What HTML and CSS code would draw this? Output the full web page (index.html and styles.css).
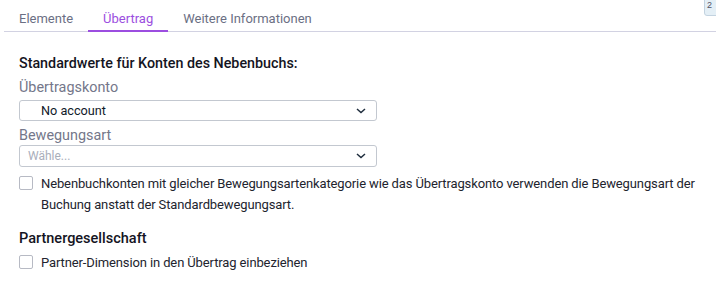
FILE: index.html
```html
<!DOCTYPE html>
<html lang="de">
<head>
  <meta charset="UTF-8">
  <title>Übertrag</title>
  <link rel="stylesheet" href="styles.css">
</head>
<body>
  <button class="corner-button">2</button>

  <!-- Tabs -->
  <div class="tabs">
    <a class="tab">Elemente</a>
    <a class="tab active">Übertrag</a>
    <a class="tab">Weitere Informationen</a>
  </div>

  <div class="panel">
    <h2>Standardwerte für Konten des Nebenbuchs:</h2>

    <label class="field-label">Übertragskonto</label>
    <div class="select">
      <span class="select-value">No account</span>
      <svg class="chevron" width="10" height="6" viewBox="0 0 10 6"><path d="M1 1l4 3.5L9 1" fill="none" stroke="#1f2d3d" stroke-width="1.5"/></svg>
    </div>

    <label class="field-label field-label-tight">Bewegungsart</label>
    <div class="select select-tall">
      <span class="select-placeholder">Wähle...</span>
      <svg class="chevron" width="10" height="6" viewBox="0 0 10 6"><path d="M1 1l4 3.5L9 1" fill="none" stroke="#1f2d3d" stroke-width="1.5"/></svg>
    </div>

    <label class="check">
      <span class="box"></span>
      <span class="check-text">Nebenbuchkonten mit gleicher Bewegungsartenkategorie wie das Übertragskonto verwenden die Bewegungsart der Buchung anstatt der Standardbewegungsart.</span>
    </label>

    <h3>Partnergesellschaft</h3>

    <label class="check check-last">
      <span class="box"></span>
      <span class="check-text">Partner-Dimension in den Übertrag einbeziehen</span>
    </label>
  </div>
</body>
</html>
```

FILE: styles.css
```css
body {
  margin: 0;
  background: #ffffff;
  color: #1c1c28;
  font-family: Roboto, "Liberation Sans", sans-serif;
  font-size: 14px;
}

.corner-button {
  position: absolute;
  top: -6px;
  left: 704px;
  width: 26px;
  height: 22px;
  padding: 0 0 0 2px;
  text-align: left;
  background: #e4eff6;
  border: 1px solid #c3d3e0;
  border-radius: 3px;
  color: #556;
  font-size: 9px;
}

/* Tabs */
.tabs {
  display: flex;
  margin: 0 0 0 4px;
  padding-top: 8px;
  border-bottom: 1px solid #d2d2e2;
  font-size: 13px;
}

.tab {
  padding: 3px 15px 4px;
  color: #6b6f84;
  border-bottom: 2px solid transparent;
  margin-bottom: -1px;
}

.tab.active {
  color: #9c4ee0;
  border-bottom-color: #9c4ee0;
}

.panel {
  padding: 23px 19px 0;
}

h2 {
  margin: 0 0 8px;
  font-size: 14.3px;
  font-weight: 500;
  color: #141422;
}

.field-label {
  display: block;
  color: #74778a;
  font-size: 14.4px;
  margin-bottom: 4px;
}

.field-label-tight {
  margin-top: 3px;
  margin-bottom: 1px;
}

.select {
  width: 358px;
  height: 21px;
  box-sizing: border-box;
  border: 1px solid #c3c8d0;
  border-radius: 3px;
  display: flex;
  align-items: center;
  justify-content: space-between;
  padding: 0 10px 0 21px;
  margin-bottom: 6px;
}

.select-tall {
  height: 22px;
}

.select-value {
  color: #111a2a;
  font-size: 12.7px;
}

.select-placeholder {
  color: #a9aebb;
  font-size: 12px;
  margin-left: -13px;
}

.check {
  display: flex;
  gap: 8px;
  align-items: flex-start;
  margin-top: 2px;
  font-size: 13px;
  letter-spacing: -0.12px;
  line-height: 21px;
  color: #22242e;
}

.check-last {
  margin-top: 5px;
}

.box {
  flex: none;
  width: 12px;
  height: 12px;
  margin-top: 3px;
  border: 1px solid #b7bac4;
  border-radius: 2px;
}

h3 {
  margin: 15px 0 0;
  font-size: 14.5px;
  font-weight: 500;
  color: #141422;
}
```
